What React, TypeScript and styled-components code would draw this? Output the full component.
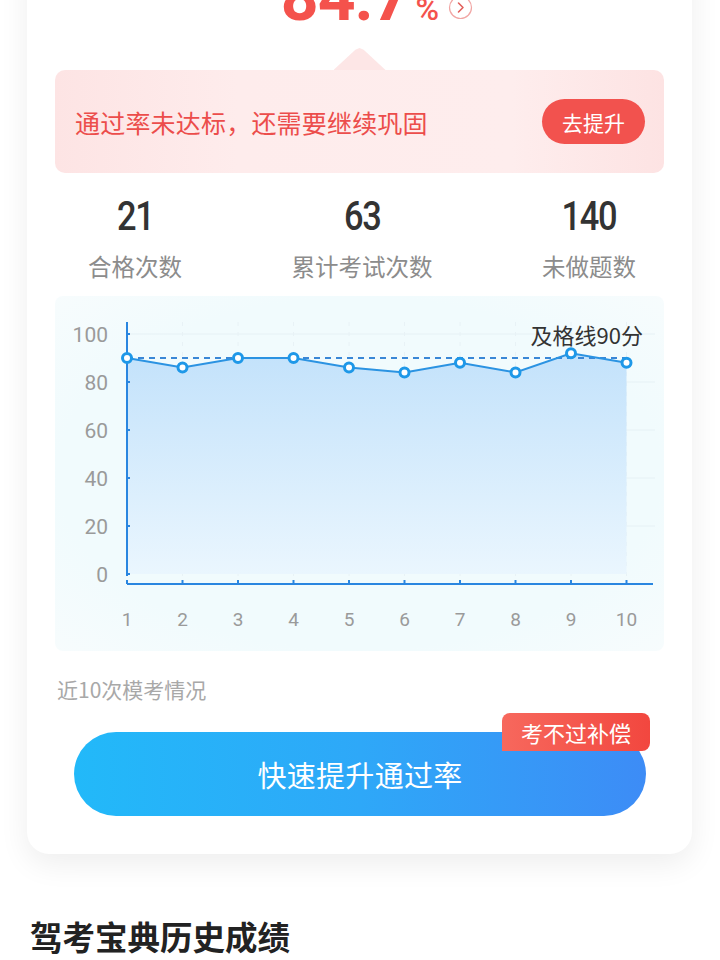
import React from 'react';
import styled, { createGlobalStyle } from 'styled-components';

const GlobalStyle = createGlobalStyle`
  html, body {
    margin: 0;
    padding: 0;
    background: #ffffff;
    font-family: "Noto Sans CJK SC", "Noto Sans", sans-serif;
    overflow: hidden;
  }
`;

const Page = styled.div`
  width: 720px;
  height: 960px;
  overflow: hidden;
  padding: 0 28px 0 27px;
  box-sizing: border-box;
`;

const Card = styled.div`
  margin-top: -42px;
  background: #ffffff;
  border-radius: 0 0 22px 22px;
  box-shadow: 0 10px 30px rgba(0, 0, 0, 0.07);
  padding: 0 28px 38px 28px;
`;

const ScoreRow = styled.div`
  display: flex;
  justify-content: center;
  height: 80px;
`;

const ScoreValue = styled.div`
  position: relative;
  display: flex;
  align-items: baseline;
  color: #f4524c;
  font-family: Roboto, "Liberation Sans", sans-serif;
  font-weight: 700;
  font-size: 66px;
  line-height: 80px;
  letter-spacing: -1px;
`;

const Percent = styled.span`
  font-size: 32px;
  font-weight: 500;
  margin-left: 6px;
`;

const MoreIcon = styled.svg`
  position: absolute;
  left: calc(100% + 10px);
  top: 37px;
  width: 25px;
  height: 25px;
`;

const Pointer = styled.div`
  width: 52px;
  height: 22px;
  margin: 10px auto 0;
  background: #fde6e6;
  clip-path: polygon(0 100%, 42% 8%, 50% 0, 58% 8%, 100% 100%);
`;

const Banner = styled.div`
  display: flex;
  align-items: center;
  justify-content: space-between;
  height: 103px;
  padding: 0 19px 0 20px;
  border-radius: 10px;
  background: linear-gradient(90deg, #fde4e4 0%, #feecec 30%, #feeded 75%, #fde3e3 100%);
`;

const BannerText = styled.div`
  color: #ec4d4b;
  font-size: 25px;
  letter-spacing: 0.2px;
`;

const BoostButton = styled.div`
  display: flex;
  align-items: center;
  justify-content: center;
  width: 103px;
  height: 45px;
  border-radius: 23px;
  background: #f2524e;
  color: #ffffff;
  font-size: 21px;
`;

const StatsRow = styled.div`
  display: flex;
  justify-content: space-between;
  padding: 0 28px 0 33px;
  margin-top: 22px;
`;

const Stat = styled.div`
  display: flex;
  flex-direction: column;
  align-items: center;
`;

const StatNumber = styled.div`
  font-family: Roboto, "Liberation Sans", sans-serif;
  font-weight: 500;
  font-size: 40px;
  line-height: 44px;
  letter-spacing: -1.5px;
  color: #333333;
  transform: scaleX(0.86);
`;

const StatLabel = styled.div`
  margin-top: 12px;
  font-size: 23.5px;
  line-height: 30px;
  color: #8c8c8c;
`;

const ChartBox = styled.div`
  margin-top: 15px;
  height: 355px;
  border-radius: 8px;
  background: radial-gradient(ellipse at center, #f1fbfd 70%, #f7fcfd 100%);
`;

const Caption = styled.div`
  margin-top: 25px;
  padding-left: 2px;
  font-size: 21px;
  line-height: 26px;
  color: #a8a8a8;
`;

const ButtonWrap = styled.div`
  position: relative;
  margin: 11px 18px 0 19px;
  padding-top: 19px;
`;

const MainButton = styled.div`
  display: flex;
  align-items: center;
  justify-content: center;
  height: 84px;
  border-radius: 42px;
  background: linear-gradient(90deg, #22b9f9 0%, #2ea8f8 50%, #3d8cf6 100%);
  color: #ffffff;
  font-size: 29px;
  letter-spacing: 0.3px;
`;

const Badge = styled.div`
  position: absolute;
  top: 0;
  right: -4px;
  width: 148px;
  height: 38px;
  display: flex;
  align-items: center;
  justify-content: center;
  border-radius: 8px 8px 8px 0;
  background: linear-gradient(90deg, #f7685d 0%, #f2473f 100%);
  color: #ffffff;
  font-size: 22px;
`;

const SectionTitle = styled.div`
  margin-top: 62px;
  padding-left: 3px;
  font-size: 32.5px;
  line-height: 40px;
  font-weight: 700;
  color: #222222;
`;

const scores = [90, 86, 90, 90, 86, 84, 88, 84, 92, 88];
const yTicks = [100, 80, 60, 40, 20, 0];

const X0 = 72;
const STEP = 55.5;
const yOf = (v: number): number => 278 - v * 2.4;
const xOf = (i: number): number => X0 + i * STEP;

const ScoreChart = (): React.ReactElement => {
  const pts = scores.map((v, i) => `${xOf(i)},${yOf(v)}`).join(' ');
  const last = xOf(scores.length - 1);
  const area = `${X0},278 ${pts} ${last},278`;

  return (
    <svg width="608" height="355" viewBox="0 0 608 355">
      <defs>
        <linearGradient id="areaFill" x1="0" y1="0" x2="0" y2="1">
          <stop offset="0%" stopColor="#c3e2fb" />
          <stop offset="100%" stopColor="#eaf6fe" />
        </linearGradient>
      </defs>

      {yTicks.slice(0, 5).map((t) => (
        <line key={t} x1={X0} x2={600} y1={yOf(t)} y2={yOf(t)} stroke="#e6f1f5" strokeWidth="1" />
      ))}
      {scores.map((_, i) => (
        <line key={i} x1={xOf(i)} x2={xOf(i)} y1={26} y2={288} stroke="#e8f2f6" strokeWidth="1" strokeDasharray="4 6" />
      ))}

      <polygon points={area} fill="url(#areaFill)" />

      <line x1={X0} x2={last} y1={yOf(90)} y2={yOf(90)} stroke="#3a87d6" strokeWidth="2" strokeDasharray="6 5" />

      <line x1={X0} x2={X0} y1={26} y2={280} stroke="#2a86e0" strokeWidth="2" />
      {yTicks.map((t) => (
        <line key={t} x1={X0} x2={X0 + 3} y1={yOf(t)} y2={yOf(t)} stroke="#2a86e0" strokeWidth="2" />
      ))}
      <line x1={X0} x2={598} y1={288} y2={288} stroke="#2a86e0" strokeWidth="2" />
      {scores.map((_, i) => (
        <line key={i} x1={xOf(i)} x2={xOf(i)} y1={284} y2={288} stroke="#2a86e0" strokeWidth="2" />
      ))}

      <polyline points={pts} fill="none" stroke="#2b93e2" strokeWidth="2" />
      {scores.map((v, i) => (
        <circle key={i} cx={xOf(i)} cy={yOf(v)} r="4.5" fill="#ffffff" stroke="#1e98e8" strokeWidth="3" />
      ))}

      <g fontFamily="Roboto, 'Liberation Sans', sans-serif" fill="#9a9a9a">
        {yTicks.map((t) => (
          <text key={t} x={53} y={yOf(t) + 7.5} textAnchor="end" fontSize="21">
            {t}
          </text>
        ))}
        {scores.map((_, i) => (
          <text key={i} x={xOf(i)} y={330} textAnchor="middle" fontSize="19">
            {i + 1}
          </text>
        ))}
      </g>
      <text
        x={588}
        y={48}
        textAnchor="end"
        fontFamily="'Noto Sans CJK SC', sans-serif"
        fontSize="22"
        fill="#333333"
      >
        及格线90分
      </text>
    </svg>
  );
};

const App = (): React.ReactElement => (
  <>
    <GlobalStyle />
    <Page>
      <Card>
        <ScoreRow>
          <ScoreValue>
            84.7<Percent>%</Percent>
            <MoreIcon viewBox="0 0 25 25">
              <circle cx="12.5" cy="12.5" r="11" fill="none" stroke="#f1a6a4" strokeWidth="1.2" />
              <path d="M10.5 8 L15 12.5 L10.5 17" fill="none" stroke="#e2605c" strokeWidth="1.6" strokeLinecap="round" strokeLinejoin="round" />
            </MoreIcon>
          </ScoreValue>
        </ScoreRow>

        <Pointer />
        <Banner>
          <BannerText>通过率未达标，还需要继续巩固</BannerText>
          <BoostButton>去提升</BoostButton>
        </Banner>

        <StatsRow>
          <Stat>
            <StatNumber>21</StatNumber>
            <StatLabel>合格次数</StatLabel>
          </Stat>
          <Stat>
            <StatNumber>63</StatNumber>
            <StatLabel>累计考试次数</StatLabel>
          </Stat>
          <Stat>
            <StatNumber>140</StatNumber>
            <StatLabel>未做题数</StatLabel>
          </Stat>
        </StatsRow>

        <ChartBox>
          <ScoreChart />
        </ChartBox>

        <Caption>近10次模考情况</Caption>

        <ButtonWrap>
          <MainButton>快速提升通过率</MainButton>
          <Badge>考不过补偿</Badge>
        </ButtonWrap>
      </Card>

      <SectionTitle>驾考宝典历史成绩</SectionTitle>
    </Page>
  </>
);

export default App;
